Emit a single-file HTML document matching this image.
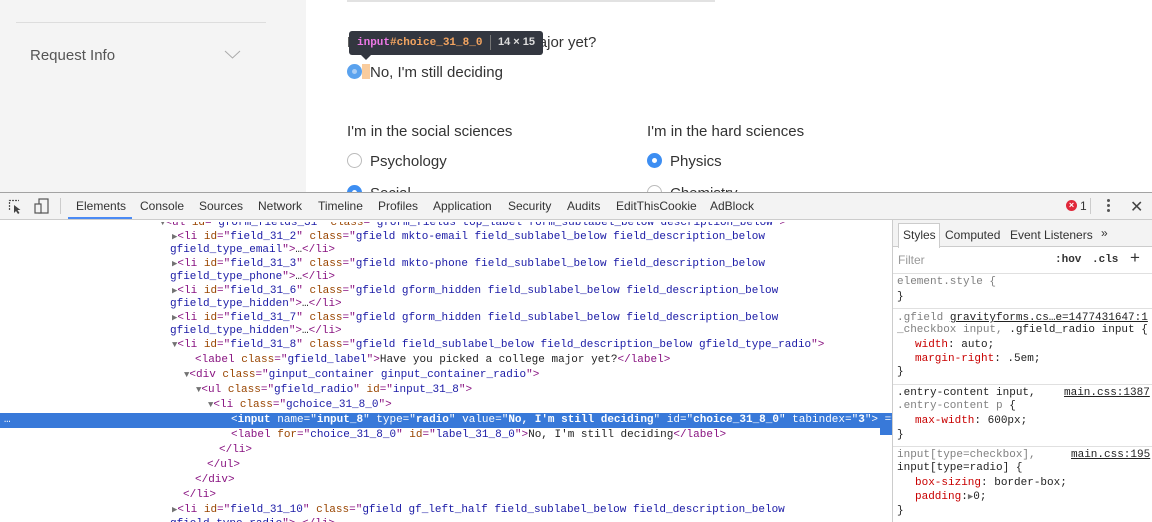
<!DOCTYPE html>
<html><head><meta charset="utf-8"><style>
*{margin:0;padding:0;box-sizing:border-box}
body{width:1152px;height:522px;overflow:hidden;position:relative;background:#fff;font-family:"Liberation Sans",sans-serif}
.a{position:absolute;white-space:pre}
.pg{font-size:15px;color:#333}
.code{font-family:"Liberation Mono",monospace;font-size:11px;line-height:14px;color:#222}
.t{color:#881280}.n{color:#994500}.v{color:#1a1aa6}.g{color:#808080}
.tri{color:#727272;font-size:9px}
.ui{font-size:12px;color:#333}
.radio{position:absolute;width:15px;height:15px;border-radius:50%;border:1px solid #bbb;background:#fff}
.radio.on{border:none;background:#3d8ef2}
.radio.on::after{content:"";position:absolute;left:5px;top:5px;width:5px;height:5px;border-radius:50%;background:#fff}
.sep{position:absolute;left:893px;width:259px;height:1px;background:#e0e0e0}
.p{color:#c80000}
</style></head><body>
<!-- page -->
<div class="a" style="left:0;top:0;width:306px;height:192px;background:#f4f4f4"></div>
<div class="a" style="left:16px;top:22px;width:250px;height:1px;background:#ddd"></div>
<div class="a pg" style="left:30px;top:47px;color:#555">Request Info</div>
<svg class="a" style="left:224px;top:50px" width="17" height="10"><path d="M1 1 L8.5 8 L16 1" fill="none" stroke="#aaa" stroke-width="1"/></svg>
<div class="a" style="left:347px;top:0;width:368px;height:2px;background:#e2e2e2"></div>
<div class="a pg" style="left:347px;top:34px">Have you picked a college major yet?</div>
<div class="a" style="left:349px;top:31px;width:194px;height:24px;background:#333740;border-radius:3px"></div>
<div class="a" style="left:360px;top:54px;width:0;height:0;border-left:6px solid transparent;border-right:6px solid transparent;border-top:6px solid #333740"></div>
<div class="a code" style="left:357px;top:36px;font-weight:bold;font-size:11px"><span style="color:#ee78e6">input</span><span style="color:#f3a460">#choice_31_8_0</span></div>
<div class="a" style="left:490px;top:35px;width:1px;height:15px;background:#777"></div>
<div class="a" style="left:498px;top:36px;font-size:11px;color:#ddd;font-weight:bold">14 × 15</div>
<div class="a" style="left:362px;top:64px;width:8px;height:15px;background:#f9cc9d"></div>
<div class="a" style="left:347px;top:64px;width:15px;height:15px;border-radius:50%;background:#5aa2ee"></div>
<div class="a" style="left:352px;top:69px;width:5px;height:5px;border-radius:50%;background:#a9cdf5"></div>
<div class="a pg" style="left:370px;top:64px">No, I'm still deciding</div>
<div class="a pg" style="left:347px;top:123px">I'm in the social sciences</div>
<div class="a pg" style="left:647px;top:123px">I'm in the hard sciences</div>
<div class="radio" style="left:347px;top:153px"></div>
<div class="a pg" style="left:370px;top:153px">Psychology</div>
<div class="radio on" style="left:647px;top:153px"></div>
<div class="a pg" style="left:670px;top:153px">Physics</div>
<div class="radio on" style="left:347px;top:185px"></div>
<div class="a pg" style="left:370px;top:185px">Social</div>
<div class="radio" style="left:647px;top:185px"></div>
<div class="a pg" style="left:670px;top:185px">Chemistry</div>

<!-- devtools -->
<div class="a" style="left:0;top:192px;width:1152px;height:330px;background:#fff;border-top:1px solid #a3a3a3"></div>
<div class="code a" style="left:0;top:222px;width:892px;height:300px;overflow:hidden">
<div class="a" style="left:160px;top:-6px"><span class="tri">▼</span><span class="t">&lt;ul</span> <span class="n">id</span><span class="t">="</span><span class="v">gform_fields_31</span><span class="t">"</span> <span class="n">class</span><span class="t">="</span><span class="v">gform_fields top_label form_sublabel_below description_below</span><span class="t">"&gt;</span></div>
<div class="a" style="left:172px;top:8px"><span class="tri">▶</span><span class="t">&lt;li</span> <span class="n">id</span><span class="t">="</span><span class="v">field_31_2</span><span class="t">"</span> <span class="n">class</span><span class="t">="</span><span class="v">gfield mkto-email field_sublabel_below field_description_below</span></div>
<div class="a" style="left:170px;top:21px"><span class="v">gfield_type_email</span><span class="t">"&gt;</span>…<span class="t">&lt;/li&gt;</span></div>
<div class="a" style="left:172px;top:35px"><span class="tri">▶</span><span class="t">&lt;li</span> <span class="n">id</span><span class="t">="</span><span class="v">field_31_3</span><span class="t">"</span> <span class="n">class</span><span class="t">="</span><span class="v">gfield mkto-phone field_sublabel_below field_description_below</span></div>
<div class="a" style="left:170px;top:48px"><span class="v">gfield_type_phone</span><span class="t">"&gt;</span>…<span class="t">&lt;/li&gt;</span></div>
<div class="a" style="left:172px;top:62px"><span class="tri">▶</span><span class="t">&lt;li</span> <span class="n">id</span><span class="t">="</span><span class="v">field_31_6</span><span class="t">"</span> <span class="n">class</span><span class="t">="</span><span class="v">gfield gform_hidden field_sublabel_below field_description_below</span></div>
<div class="a" style="left:170px;top:75px"><span class="v">gfield_type_hidden</span><span class="t">"&gt;</span>…<span class="t">&lt;/li&gt;</span></div>
<div class="a" style="left:172px;top:89px"><span class="tri">▶</span><span class="t">&lt;li</span> <span class="n">id</span><span class="t">="</span><span class="v">field_31_7</span><span class="t">"</span> <span class="n">class</span><span class="t">="</span><span class="v">gfield gform_hidden field_sublabel_below field_description_below</span></div>
<div class="a" style="left:170px;top:102px"><span class="v">gfield_type_hidden</span><span class="t">"&gt;</span>…<span class="t">&lt;/li&gt;</span></div>
<div class="a" style="left:172px;top:116px"><span class="tri">▼</span><span class="t">&lt;li</span> <span class="n">id</span><span class="t">="</span><span class="v">field_31_8</span><span class="t">"</span> <span class="n">class</span><span class="t">="</span><span class="v">gfield field_sublabel_below field_description_below gfield_type_radio</span><span class="t">"&gt;</span></div>
<div class="a" style="left:195px;top:131px"><span class="t">&lt;label</span> <span class="n">class</span><span class="t">="</span><span class="v">gfield_label</span><span class="t">"&gt;</span>Have you picked a college major yet?<span class="t">&lt;/label&gt;</span></div>
<div class="a" style="left:184px;top:146px"><span class="tri">▼</span><span class="t">&lt;div</span> <span class="n">class</span><span class="t">="</span><span class="v">ginput_container ginput_container_radio</span><span class="t">"&gt;</span></div>
<div class="a" style="left:196px;top:161px"><span class="tri">▼</span><span class="t">&lt;ul</span> <span class="n">class</span><span class="t">="</span><span class="v">gfield_radio</span><span class="t">"</span> <span class="n">id</span><span class="t">="</span><span class="v">input_31_8</span><span class="t">"&gt;</span></div>
<div class="a" style="left:208px;top:176px"><span class="tri">▼</span><span class="t">&lt;li</span> <span class="n">class</span><span class="t">="</span><span class="v">gchoice_31_8_0</span><span class="t">"&gt;</span></div>
<div class="a" style="left:0;top:191px;width:892px;height:15px;background:#3879d9"></div>
<div class="a" style="left:4px;top:191px;color:#fff">…</div>
<div class="a" style="left:231px;top:191px;color:#fff">&lt;<b>input</b> name="<b>input_8</b>" type="<b>radio</b>" value="<b>No, I'm still deciding</b>" id="<b>choice_31_8_0</b>" tabindex="<b>3</b>"&gt; == $0</div>
<div class="a" style="left:231px;top:206px"><span class="t">&lt;label</span> <span class="n">for</span><span class="t">="</span><span class="v">choice_31_8_0</span><span class="t">"</span> <span class="n">id</span><span class="t">="</span><span class="v">label_31_8_0</span><span class="t">"&gt;</span>No, I'm still deciding<span class="t">&lt;/label&gt;</span></div>
<div class="a" style="left:219px;top:221px"><span class="t">&lt;/li&gt;</span></div>
<div class="a" style="left:207px;top:236px"><span class="t">&lt;/ul&gt;</span></div>
<div class="a" style="left:195px;top:251px"><span class="t">&lt;/div&gt;</span></div>
<div class="a" style="left:183px;top:266px"><span class="t">&lt;/li&gt;</span></div>
<div class="a" style="left:172px;top:281px"><span class="tri">▶</span><span class="t">&lt;li</span> <span class="n">id</span><span class="t">="</span><span class="v">field_31_10</span><span class="t">"</span> <span class="n">class</span><span class="t">="</span><span class="v">gfield gf_left_half field_sublabel_below field_description_below</span></div>
<div class="a" style="left:170px;top:295px"><span class="v">gfield_type_radio</span><span class="t">"&gt;</span>…<span class="t">&lt;/li&gt;</span></div>
</div>
<!-- toolbar -->
<div class="a" style="left:0;top:193px;width:1152px;height:27px;background:#f3f3f3;border-bottom:1px solid #ccc"></div>
<svg class="a" style="left:8px;top:199px" width="16" height="16"><path d="M1.5 11 V1.5 H11" fill="none" stroke="#555" stroke-width="1.2" stroke-dasharray="2 1"/><path d="M6 6 L6 14 L8 12 L10 15 L11.5 14 L9.5 11 L12.5 11 Z" fill="#444"/></svg>
<svg class="a" style="left:34px;top:198px" width="16" height="17"><rect x="5" y="1" width="9" height="14" fill="none" stroke="#555" stroke-width="1.2"/><rect x="1" y="6" width="6" height="9" fill="#f3f3f3" stroke="#555" stroke-width="1.2"/></svg>
<div class="a" style="left:60px;top:198px;width:1px;height:16px;background:#ccc"></div>
<div class="a" style="left:68px;top:217px;width:64px;height:2px;background:#4a8af4"></div>
<div class="a ui" style="left:76px;top:199px">Elements</div>
<div class="a ui" style="left:140px;top:199px">Console</div>
<div class="a ui" style="left:199px;top:199px">Sources</div>
<div class="a ui" style="left:258px;top:199px">Network</div>
<div class="a ui" style="left:318px;top:199px">Timeline</div>
<div class="a ui" style="left:378px;top:199px">Profiles</div>
<div class="a ui" style="left:433px;top:199px">Application</div>
<div class="a ui" style="left:508px;top:199px">Security</div>
<div class="a ui" style="left:567px;top:199px">Audits</div>
<div class="a ui" style="left:616px;top:199px">EditThisCookie</div>
<div class="a ui" style="left:710px;top:199px">AdBlock</div>
<div class="a" style="left:1066px;top:200px;width:11px;height:11px;border-radius:50%;background:#e0283a;color:#fff;font-size:9px;line-height:11px;text-align:center;font-weight:bold">×</div>
<div class="a ui" style="left:1080px;top:199px">1</div>
<div class="a" style="left:1090px;top:198px;width:1px;height:16px;background:#ccc"></div>
<div class="a" style="left:1107px;top:199px;width:3px;height:3px;border-radius:50%;background:#555;box-shadow:0 5px 0 #555,0 10px 0 #555"></div>
<div class="a" style="left:1130px;top:197px;font-size:16px;color:#444">✕</div>
<!-- styles panel -->
<div class="a" style="left:892px;top:220px;width:1px;height:302px;background:#ccc"></div>
<div class="a" style="left:893px;top:220px;width:259px;height:27px;background:#f3f3f3;border-bottom:1px solid #ccc"></div>
<div class="a" style="left:898px;top:223px;width:42px;height:25px;background:#fff;border:1px solid #ccc;border-bottom:none"></div>
<div class="a ui" style="left:903px;top:228px">Styles</div>
<div class="a ui" style="left:945px;top:228px">Computed</div>
<div class="a ui" style="left:1010px;top:228px">Event Listeners</div>
<div class="a ui" style="left:1101px;top:226px">»</div>
<div class="a ui" style="left:898px;top:253px;color:#999">Filter</div>
<div class="a code" style="left:1055px;top:253px;font-weight:bold;color:#333">:hov</div>
<div class="a code" style="left:1092px;top:253px;font-weight:bold;color:#333">.cls</div>
<div class="a" style="left:1130px;top:248px;font-size:17px;color:#333">+</div>
<div class="sep" style="top:273px"></div>
<div class="code" style="position:absolute;left:897px;top:0">
<div class="a" style="left:0;top:275px"><span class="g">element.style {</span></div>
<div class="a" style="left:0;top:290px">}</div>
<div class="a" style="left:0;top:311px"><span class="g">.gfield</span> <u>gravityforms.cs…e=1477431647:1</u></div>
<div class="a" style="left:0;top:323px"><span class="g">_checkbox input, </span>.gfield_radio input {</div>
<div class="a" style="left:18px;top:338px"><span class="p">width</span>: auto;</div>
<div class="a" style="left:18px;top:352px"><span class="p">margin-right</span>: .5em;</div>
<div class="a" style="left:0;top:365px">}</div>
<div class="a" style="left:0;top:386px">.entry-content input,</div>
<div class="a" style="left:167px;top:386px"><u>main.css:1387</u></div>
<div class="a" style="left:0;top:399px"><span class="g">.entry-content p</span> {</div>
<div class="a" style="left:18px;top:414px"><span class="p">max-width</span>: 600px;</div>
<div class="a" style="left:0;top:428px">}</div>
<div class="a" style="left:0;top:448px"><span class="g">input[type=checkbox],</span></div>
<div class="a" style="left:174px;top:448px"><u>main.css:195</u></div>
<div class="a" style="left:0;top:461px">input[type=radio] {</div>
<div class="a" style="left:18px;top:476px"><span class="p">box-sizing</span>: border-box;</div>
<div class="a" style="left:18px;top:490px"><span class="p">padding</span>:<span class="tri">▶</span>0;</div>
<div class="a" style="left:0;top:504px">}</div>
</div>
<div class="sep" style="top:308px"></div>
<div class="sep" style="top:384px"></div>
<div class="sep" style="top:446px"></div>
<div class="a" style="left:880px;top:420px;width:12px;height:15px;background:#3879d9"></div>
</body></html>
